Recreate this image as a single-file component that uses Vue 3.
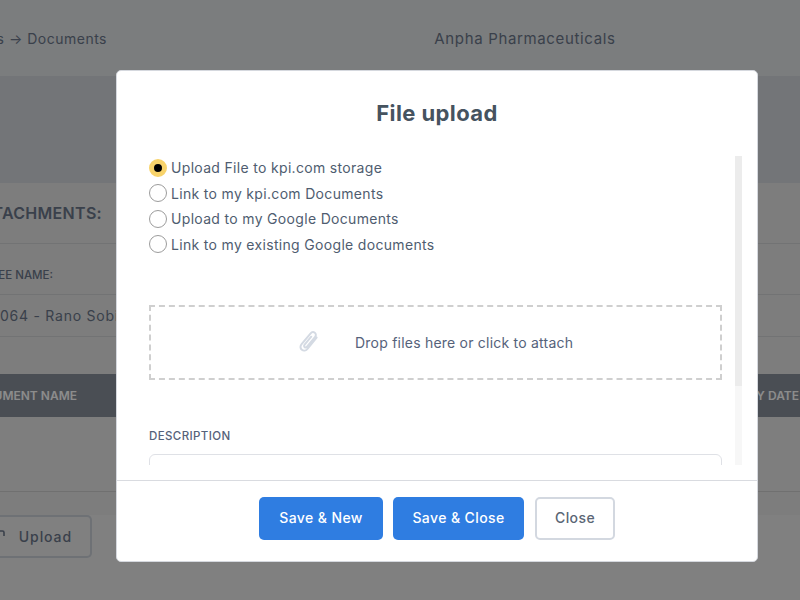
<script setup>
const options = [
  'Upload File to kpi.com storage',
  'Link to my kpi.com Documents',
  'Upload to my Google Documents',
  'Link to my existing Google documents'
]
</script>

<template>
  <div class="page">
    <header class="top">
      <div class="crumb"><span>Attachments → Documents</span></div>
      <div class="company">Anpha Pharmaceuticals</div>
    </header>
    <div class="band"></div>
    <section class="content">
      <h2 class="sec"><span>ATTACHMENTS:</span></h2>
      <div class="rule"></div>
      <div class="lbl"><span>EMPLOYEE NAME:</span></div>
      <div class="select"><span>064 - Rano Sobirov</span></div>
      <div class="thead">
        <div class="th-l"><span>DOCUMENT NAME</span></div>
        <div class="th-r">EXPIRY DATE</div>
      </div>
      <div class="empty"></div>
      <div class="upload-row">
        <div class="upload">
          <svg width="5" height="6" viewBox="0 0 5 6" fill="none" stroke="#6a7689" stroke-width="1.6"><path d="M0 1h2.5A1.5 1.5 0 0 1 4 2.5V6"/></svg>
          <span>Upload</span>
        </div>
      </div>
    </section>

    <div class="overlay"></div>

    <div class="modal">
      <h1 class="title">File upload</h1>
      <div class="body">
        <div class="scroll">
          <div class="radios">
            <label v-for="(o, i) in options" :key="o" class="radio">
              <span class="dot" :class="{ on: i === 0 }"></span>
              <span>{{ o }}</span>
            </label>
          </div>
          <div class="drop">
            <svg class="clip" width="24" height="25" viewBox="0 0 26 28" fill="none" stroke="#d4dae3" stroke-width="2.2" stroke-linecap="round" stroke-linejoin="round">
              <path d="M21.5 8.5 11.5 21c-1.8 2.2-4.6 2.7-6.5 1.2-1.9-1.5-2.1-4.3-.3-6.5L14.6 4c1.3-1.6 3.4-2 4.9-.9 1.5 1.2 1.5 3.3.2 4.9L10.8 18.6c-.8 1-1.9 1.2-2.7.6-.8-.6-.8-1.7 0-2.7l7.4-9"/>
            </svg>
            <span>Drop files here or click to attach</span>
          </div>
          <div class="desc">DESCRIPTION</div>
          <div class="area"></div>
        </div>
        <div class="track"><div class="thumb"></div></div>
      </div>
      <footer class="foot">
        <button class="btn primary new">Save &amp; New</button>
        <button class="btn primary sc">Save &amp; Close</button>
        <button class="btn ghost">Close</button>
      </footer>
    </div>
  </div>
</template>

<style>
body { margin: 0; }
</style>

<style scoped>
.page {
  position: relative;
  width: 800px;
  height: 600px;
  overflow: hidden;
  background: #e9e9e9;
  font-family: Inter, "Open Sans", sans-serif;
  color: #6a7689;
}
.top {
  height: 76px;
  background: #e0e3e5;
  display: flex;
  align-items: flex-start;
  padding-top: 30px;
  box-sizing: border-box;
  font-size: 14px;
  letter-spacing: 0.5px;
  line-height: 18px;
}
.crumb {
  width: 107px;
  display: flex;
  justify-content: flex-end;
  white-space: nowrap;
}
.company {
  width: 420px;
  margin-left: 208px;
  text-align: center;
  font-size: 15px;
  letter-spacing: 0.65px;
}
.band { height: 107px; background: #d1d6db; }
.content { display: flex; flex-direction: column; background: #e3e3e3; }
.sec {
  margin: 0;
  height: 60px;
  width: 102px;
  display: flex;
  justify-content: flex-end;
  align-items: center;
  white-space: nowrap;
  font-size: 16px;
  font-weight: 600;
  letter-spacing: 0.3px;
}
.rule { height: 1px; background: #cfd1d4; }
.lbl {
  height: 50px;
  width: 53px;
  display: flex;
  justify-content: flex-end;
  align-items: center;
  white-space: nowrap;
  font-size: 11.5px;
  font-weight: 500;
  box-sizing: border-box;
  padding-top: 12px;
}
.select {
  height: 43px;
  display: flex;
  align-items: center;
  white-space: nowrap;
  border-top: 1px solid #cfd1d4;
  border-bottom: 1px solid #cfd1d4;
  box-sizing: border-box;
  font-size: 14px;
  letter-spacing: 0.75px;
}
.thead {
  margin-top: 37px;
  height: 43px;
  background: #878e99;
  color: #fff;
  display: flex;
  justify-content: space-between;
  align-items: center;
  font-size: 12px;
  font-weight: 600;
  white-space: nowrap;
}
.th-l { width: 77px; display: flex; justify-content: flex-end; }
.th-r { margin-right: 1px; }
.empty {
  height: 75px;
  box-sizing: border-box;
  background: #e6e6e6;
  border-bottom: 1px solid #cccccc;
}
.upload-row { margin-top: 23px; height: 60px; background: #e9e9e9; }
.upload {
  width: 92px;
  height: 43px;
  box-sizing: border-box;
  border: 2px solid #c8ced6;
  border-left: 0;
  border-radius: 0 5px 5px 0;
  display: flex;
  align-items: center;
  justify-content: space-between;
  padding-right: 18px;
  font-size: 14px;
  font-weight: 500;
  letter-spacing: 0.9px;
}
.upload svg { margin-bottom: 8px; flex: none; }

.overlay {
  position: absolute;
  inset: 0;
  background: rgba(0, 0, 0, 0.45);
}

.modal {
  position: absolute;
  left: 116px;
  top: 70px;
  width: 642px;
  height: 492px;
  box-sizing: border-box;
  background: #fff;
  border-radius: 5px;
  border: 1px solid #d5d8de;
  display: flex;
  flex-direction: column;
}
.title {
  margin: 0;
  height: 85px;
  box-sizing: border-box;
  padding-top: 29px;
  text-align: center;
  font-size: 22px;
  line-height: 26px;
  font-weight: 700;
  color: #46535f;
  letter-spacing: 0.4px;
}
.body {
  height: 309px;
  margin-bottom: 15px;
  display: flex;
  overflow: hidden;
}
.scroll {
  width: 573px;
  margin-left: 32px;
  overflow: hidden;
}
.radios {
  display: flex;
  flex-direction: column;
  gap: 7.5px;
  padding-top: 2.5px;
}
.radio {
  display: flex;
  align-items: center;
  gap: 4px;
  height: 18px;
  font-size: 14px;
  letter-spacing: 0.32px;
  color: #4f5d70;
}
.dot {
  width: 18px;
  height: 18px;
  box-sizing: border-box;
  border-radius: 50%;
  border: 1px solid #9c9c9c;
  background: #fff;
  flex: none;
}
.dot.on {
  border: 5px solid #f8d36b;
  background: #000;
}
.drop {
  margin-top: 52px;
  height: 75px;
  box-sizing: border-box;
  border: 2px dashed #cfcfcf;
  display: flex;
  align-items: center;
  font-size: 14px;
  letter-spacing: 0.22px;
  color: #55627a;
}
.clip { margin-left: 146px; margin-right: 34px; flex: none; }
.desc {
  margin-top: 48px;
  font-size: 11.5px;
  line-height: 16px;
  font-weight: 500;
  letter-spacing: 0.4px;
  color: #55627a;
}
.area {
  margin-top: 10px;
  height: 80px;
  border: 1px solid #dfe1e6;
  border-radius: 6px;
}
.track {
  width: 7px;
  margin-left: 13px;
  background: #f7f7f7;
  flex: none;
}
.thumb { height: 230px; background: #ececec; }
.foot {
  flex: 1;
  border-top: 1px solid #d9dbe0;
  display: flex;
  align-items: flex-start;
  justify-content: flex-start;
  padding: 16px 0 0 142px;
  gap: 10px;
}
.btn {
  height: 43px;
  box-sizing: border-box;
  border-radius: 5px;
  font: 500 14px Inter, "Open Sans", sans-serif;
  letter-spacing: 0.4px;
  padding: 0 0 2px;
}
.primary { background: #2f7de1; color: #fff; border: 0; }
.new { width: 124px; }
.sc { width: 131px; }
.ghost {
  width: 80px;
  margin-left: 1px;
  background: #fff;
  border: 2px solid #d3d8e0;
  color: #5a6675;
}
</style>
